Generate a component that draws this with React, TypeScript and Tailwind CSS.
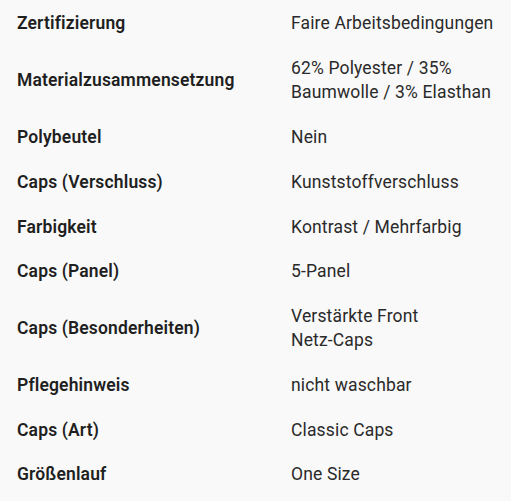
import React from "react";

const rows: [string, string[]][] = [
  ["Zertifizierung", ["Faire Arbeitsbedingungen"]],
  ["Materialzusammensetzung", ["62% Polyester / 35% Baumwolle / 3% Elasthan"]],
  ["Polybeutel", ["Nein"]],
  ["Caps (Verschluss)", ["Kunststoffverschluss"]],
  ["Farbigkeit", ["Kontrast / Mehrfarbig"]],
  ["Caps (Panel)", ["5-Panel"]],
  ["Caps (Besonderheiten)", ["Verstärkte Front", "Netz-Caps"]],
  ["Pflegehinweis", ["nicht waschbar"]],
  ["Caps (Art)", ["Classic Caps"]],
  ["Größenlauf", ["One Size"]],
];

export default function App() {
  return (
    <div
      className="min-h-[501px] w-[511px] bg-[#f9f9f9] text-[#222] text-[17.5px] leading-6 tracking-[0.15px] pt-px"
      style={{ fontFamily: "Roboto, 'Liberation Sans', sans-serif" }}
    >
      {rows.map(([label, values]) => (
        <div key={label} className="grid grid-cols-[274px_1fr] items-center py-[10.4px]">
          <div className="pl-[17px] font-semibold text-[#1f1f1f]">{label}</div>
          <div className="pl-[17px] pr-[8px] text-[#2a2a2a]">
            {values.map((v) => (
              <div key={v}>{v}</div>
            ))}
          </div>
        </div>
      ))}
    </div>
  );
}
